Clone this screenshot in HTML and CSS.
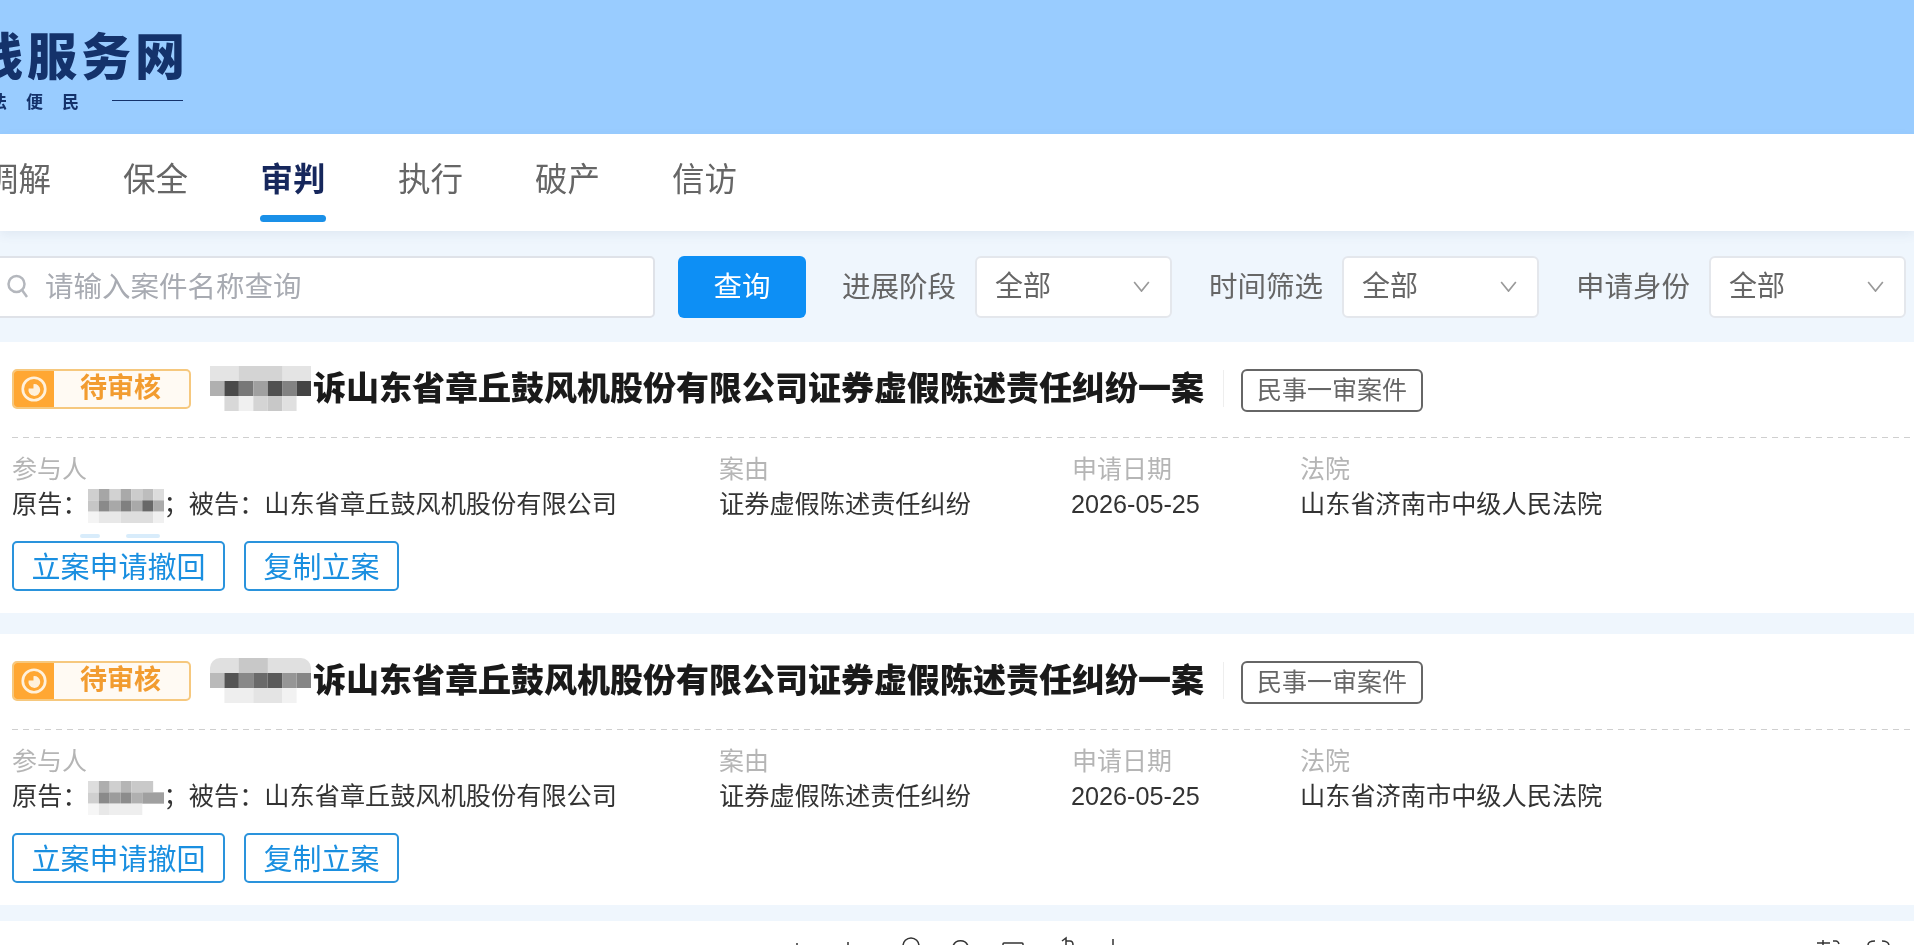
FILE: index.html
```html
<!DOCTYPE html>
<html lang="zh-CN">
<head>
  <meta charset="UTF-8">
  <meta name="viewport" content="width=device-width, initial-scale=1.0">
  <title>在线服务网</title>
  <link rel="stylesheet" href="styles.css">
</head>
<body>
  <header class="top">
    <div class="logo">
      <div class="logo-name">线服务网</div>
      <div class="logo-sub"><span class="logo-words">法便民</span><span class="logo-line"></span></div>
    </div>
  </header>

  <nav class="tabs">
    <a class="tab">调解</a>
    <a class="tab">保全</a>
    <a class="tab active">审判</a>
    <a class="tab">执行</a>
    <a class="tab">破产</a>
    <a class="tab">信访</a>
  </nav>

  <section class="filters">
    <div class="search">
      <svg class="search-icon" viewBox="0 0 22 24"><circle cx="9.5" cy="10" r="8" /><path d="M15 16l5 7" /></svg>
      <span>请输入案件名称查询</span>
    </div>
    <button class="search-btn">查询</button>
    <span class="filter-label first">进展阶段</span>
    <div class="select"><span>全部</span><svg viewBox="0 0 20 12"><path d="M2 1l8 10 8-10" /></svg></div>
    <span class="filter-label">时间筛选</span>
    <div class="select"><span>全部</span><svg viewBox="0 0 20 12"><path d="M2 1l8 10 8-10" /></svg></div>
    <span class="filter-label">申请身份</span>
    <div class="select"><span>全部</span><svg viewBox="0 0 20 12"><path d="M2 1l8 10 8-10" /></svg></div>
  </section>

  <main class="list">
    <article class="card">
      <div class="card-head">
        <div class="status">
          <span class="status-icon"><svg viewBox="0 0 28 28"><circle cx="14" cy="14" r="10.5" /><path d="M9 13.5h4.5v-4a5.5 5.5 0 1 1-4.500 4z" /></svg></span>
          <span class="status-text">待审核</span>
        </div>
        <svg class="mask-title" viewBox="0 0 7 3" preserveAspectRatio="none">
          <rect x="0" y="0" width="7" height="1" fill="#e4e4e4" /><rect x="2" y="0" width="3" height="1" fill="#d4d4d4" />
          <rect x="0" y="1" width="1" height="1" fill="#b0b0b0" /><rect x="1" y="1" width="1" height="1" fill="#4a4a4a" /><rect x="2" y="1" width="1" height="1" fill="#787878" /><rect x="3" y="1" width="1" height="1" fill="#a0a0a0" /><rect x="4" y="1" width="1" height="1" fill="#505050" /><rect x="5" y="1" width="1" height="1" fill="#828282" /><rect x="6" y="1" width="1" height="1" fill="#444444" />
          <rect x="1" y="2" width="1" height="1" fill="#d8d8d8" /><rect x="2" y="2" width="1" height="1" fill="#f0f0f0" /><rect x="3" y="2" width="1" height="1" fill="#d4d4d4" /><rect x="4" y="2" width="1" height="1" fill="#c8c8c8" /><rect x="5" y="2" width="1" height="1" fill="#e0e0e0" />
        </svg>
        <h2 class="case-title">诉山东省章丘鼓风机股份有限公司证券虚假陈述责任纠纷一案</h2>
        <span class="case-sep"></span>
        <span class="case-tag">民事一审案件</span>
      </div>
      <div class="meta">
        <div>
          <div class="meta-label">参与人</div>
          <div class="meta-value">原告：<svg class="mask-person" viewBox="0 0 7 3" preserveAspectRatio="none">
            <rect x="0" y="0" width="1" height="1" fill="#cfcfcf" /><rect x="1" y="0" width="1" height="1" fill="#a6a6a6" /><rect x="2" y="0" width="1" height="1" fill="#d2d2d2" /><rect x="3" y="0" width="1" height="1" fill="#a9a9a9" /><rect x="4" y="0" width="1" height="1" fill="#cccccc" /><rect x="5" y="0" width="1" height="1" fill="#bdbdbd" /><rect x="6" y="0" width="1" height="1" fill="#dcdcdc" />
            <rect x="0" y="1" width="1" height="1" fill="#c6c6c6" /><rect x="1" y="1" width="1" height="1" fill="#8a8a8a" /><rect x="2" y="1" width="1" height="1" fill="#a8a8a8" /><rect x="3" y="1" width="1" height="1" fill="#808080" /><rect x="4" y="1" width="1" height="1" fill="#a9a9a9" /><rect x="5" y="1" width="1" height="1" fill="#686868" /><rect x="6" y="1" width="1" height="1" fill="#ababab" />
            <rect x="0" y="2" width="1" height="1" fill="#f4f4f4" /><rect x="1" y="2" width="2" height="1" fill="#e8e8e8" /><rect x="3" y="2" width="3" height="1" fill="#dedede" /><rect x="6" y="2" width="1" height="1" fill="#f0f0f0" />
          </svg>；被告：山东省章丘鼓风机股份有限公司</div>
        </div>
        <div>
          <div class="meta-label">案由</div>
          <div class="meta-value">证券虚假陈述责任纠纷</div>
        </div>
        <div>
          <div class="meta-label">申请日期</div>
          <div class="meta-value date">2026-05-25</div>
        </div>
        <div>
          <div class="meta-label">法院</div>
          <div class="meta-value">山东省济南市中级人民法院</div>
        </div>
      </div>
      <span class="smudge one"></span>
      <span class="smudge two"></span>
      <div class="actions">
        <button class="action wide">立案申请撤回</button>
        <button class="action">复制立案</button>
      </div>
    </article>

    <article class="card">
      <div class="card-head">
        <div class="status">
          <span class="status-icon"><svg viewBox="0 0 28 28"><circle cx="14" cy="14" r="10.5" /><path d="M9 13.5h4.5v-4a5.500 5.500 0 1 1-4.500 4z" /></svg></span>
          <span class="status-text">待审核</span>
        </div>
        <svg class="mask-title round" viewBox="0 0 7 3" preserveAspectRatio="none">
          <rect x="0" y="0" width="7" height="1" fill="#e0e0e0" /><rect x="2" y="0" width="2" height="1" fill="#c8c8c8" />
          <rect x="0" y="1" width="1" height="1" fill="#bababa" /><rect x="1" y="1" width="1" height="1" fill="#545454" /><rect x="2" y="1" width="1" height="1" fill="#888888" /><rect x="3" y="1" width="1" height="1" fill="#6a6a6a" /><rect x="4" y="1" width="1" height="1" fill="#5a5a5a" /><rect x="5" y="1" width="1" height="1" fill="#969696" /><rect x="6" y="1" width="1" height="1" fill="#868686" />
          <rect x="1" y="2" width="2" height="1" fill="#eeeeee" /><rect x="3" y="2" width="2" height="1" fill="#e4e4e4" /><rect x="5" y="2" width="1" height="1" fill="#f2f2f2" />
        </svg>
        <h2 class="case-title">诉山东省章丘鼓风机股份有限公司证券虚假陈述责任纠纷一案</h2>
        <span class="case-sep"></span>
        <span class="case-tag">民事一审案件</span>
      </div>
      <div class="meta">
        <div>
          <div class="meta-label">参与人</div>
          <div class="meta-value">原告：<svg class="mask-person" viewBox="0 0 7 3" preserveAspectRatio="none">
            <rect x="0" y="0" width="1" height="1" fill="#dddddd" /><rect x="1" y="0" width="1" height="1" fill="#aeaeae" /><rect x="2" y="0" width="1" height="1" fill="#cfcfcf" /><rect x="3" y="0" width="1" height="1" fill="#b5b5b5" /><rect x="4" y="0" width="2" height="1" fill="#c9c9c9" />
            <rect x="0" y="1" width="1" height="1" fill="#cfcfcf" /><rect x="1" y="1" width="1" height="1" fill="#8a8a8a" /><rect x="2" y="1" width="1" height="1" fill="#9c9c9c" /><rect x="3" y="1" width="1" height="1" fill="#8c8c8c" /><rect x="4" y="1" width="1" height="1" fill="#b0b0b0" /><rect x="5" y="1" width="2" height="1" fill="#a0a0a0" />
            <rect x="0" y="2" width="1" height="1" fill="#f6f6f6" /><rect x="1" y="2" width="1" height="1" fill="#e8e8e8" /><rect x="2" y="2" width="3" height="1" fill="#eeeeee" />
          </svg>；被告：山东省章丘鼓风机股份有限公司</div>
        </div>
        <div>
          <div class="meta-label">案由</div>
          <div class="meta-value">证券虚假陈述责任纠纷</div>
        </div>
        <div>
          <div class="meta-label">申请日期</div>
          <div class="meta-value date">2026-05-25</div>
        </div>
        <div>
          <div class="meta-label">法院</div>
          <div class="meta-value">山东省济南市中级人民法院</div>
        </div>
      </div>
      <div class="actions">
        <button class="action wide">立案申请撤回</button>
        <button class="action">复制立案</button>
      </div>
    </article>
  </main>

  <footer class="toolbar">
    <svg viewBox="0 0 1914 24">
      <path d="M797 24v-2M848 24v-3M1113 24v-6" />
      <path d="M903 25a8 8 0 0 1 16 0M953 25a8 8 0 0 1 15 0" />
      <path d="M1003 25v-2q0-1 1-1h18q1 0 1 1v2" />
      <path d="M1062 20l4-3v7M1066 20h4q3 0 3 4" />
      <path d="M1817 22h13M1823 19v6M1833 20h3q2 0 3 3" />
      <path d="M1868 24q0-4 7-4M1882 20q6 0 7 4" />
    </svg>
  </footer>
</body>
</html>
```

FILE: styles.css
```css
* {
  box-sizing: border-box;
  margin: 0;
  padding: 0;
}

html, body {
  width: 1914px;
  height: 945px;
  overflow: hidden;
}

body {
  background: white;
  font-family: "Liberation Sans", "Noto Sans CJK SC", sans-serif;
  color: #333;
  filter: blur(0.5px);
}

.top {
  height: 134px;
  background: #99ccff;
  padding-top: 26px;
  overflow: hidden;
}

.logo {
  margin-left: -27px;
  color: #14326b;
}

.logo-name {
  font-size: 50px;
  line-height: 64px;
  font-weight: 900;
  letter-spacing: 4px;
}

.logo-sub {
  display: flex;
  align-items: center;
  height: 20px;
  margin-left: 17px;
}

.logo-words {
  font-family: "Noto Sans CJK SC", sans-serif;
  font-size: 17px;
  font-weight: 700;
  letter-spacing: 19px;
}

.logo-line {
  width: 71px;
  height: 1px;
  margin-left: 14px;
  background: #14326b;
}

.tabs {
  position: relative;
  display: flex;
  gap: 72px;
  height: 97px;
  padding: 24px 0 0 0;
  background: white;
  box-shadow: 0 4px 10px rgba(60, 90, 130, 0.08);
}

.tab {
  display: flex;
  flex-direction: column;
  align-items: center;
  font-size: 32.5px;
  line-height: 44px;
  color: #666;
}

.tab:first-child {
  margin-left: -14px;
}

.tab.active {
  font-weight: 700;
  color: #16275c;
}

.tab.active::after {
  content: "";
  width: 66px;
  height: 7px;
  margin-top: 13px;
  border-radius: 4px;
  background: #1a90e8;
}

.filters {
  display: flex;
  align-items: center;
  height: 111px;
  margin-left: -12px;
  background: #eff6fd;
}

.search {
  display: flex;
  align-items: center;
  gap: 16px;
  width: 667px;
  height: 62px;
  padding: 0 0 5px 17px;
  background: white;
  border: 2px solid #dfe2e8;
  border-radius: 5px;
  font-size: 28.5px;
  color: #a8abb2;
}

.search-icon {
  width: 22px;
  height: 24px;
  margin-top: 3px;
  fill: none;
  stroke: #b4b7bd;
  stroke-width: 2.5;
}

.search-btn {
  width: 128px;
  height: 62px;
  margin-left: 23px;
  padding-bottom: 5px;
  border: none;
  border-radius: 6px;
  background: #0d8ff5;
  color: white;
  font-family: inherit;
  font-size: 28.5px;
}

.filter-label {
  margin: 0 19px 0 37px;
  padding-bottom: 5px;
  font-size: 28.5px;
  color: #666;
}

.filter-label.first {
  margin-left: 36px;
}

.select {
  display: flex;
  align-items: center;
  justify-content: space-between;
  width: 197px;
  height: 62px;
  padding: 0 19px 0 18px;
  background: white;
  border: 2px solid #e4e7ec;
  border-radius: 6px;
  font-size: 28px;
  color: #666;
}

.select span {
  padding-bottom: 5px;
}

.select svg {
  width: 19px;
  height: 11px;
  fill: none;
  stroke: #999;
  stroke-width: 1.8;
}

.list {
  display: flex;
  flex-direction: column;
  gap: 21px;
  padding-bottom: 16px;
  background: #eff6fd;
}

.card {
  position: relative;
  height: 271px;
  padding: 23px 0 0 12px;
  background: white;
}

.card-head {
  display: flex;
  align-items: center;
  height: 47px;
  margin-bottom: 25px;
}

.status {
  display: flex;
  width: 179px;
  height: 40px;
  border: 2px solid #f6c87e;
  border-radius: 5px;
  background: #fffaf3;
  overflow: hidden;
}

.status-icon {
  display: flex;
  align-items: center;
  justify-content: center;
  width: 41px;
  margin-left: -1px;
  background: #ffa733;
}

.status-icon svg {
  width: 30px;
  height: 30px;
}

.status-icon circle {
  fill: none;
  stroke: #fff1dc;
  stroke-width: 2.5;
}

.status-icon path {
  fill: #fff1dc;
}

.status-text {
  margin-left: 26px;
  font-size: 27px;
  font-weight: 700;
  line-height: 34px;
  color: #f29c30;
}

.mask-title {
  width: 101px;
  height: 45px;
  margin-left: 19px;
  flex-shrink: 0;
  filter: blur(0.6px);
}

.mask-title.round {
  border-radius: 10px;
}

.case-title {
  margin-left: 2px;
  font-size: 33px;
  line-height: 44px;
  font-weight: 900;
  color: #1a1a1a;
  white-space: nowrap;
}

.case-sep {
  width: 1px;
  height: 37px;
  margin: 0 17px 0 19px;
  background: #eee;
}

.case-tag {
  height: 43px;
  margin-top: 4px;
  padding: 0 14px;
  border: 2px solid #666;
  border-radius: 6px;
  font-size: 25px;
  line-height: 38px;
  color: #666;
}

.meta {
  display: grid;
  grid-template-columns: 707px 353px 228px 1fr;
  padding-top: 15px;
  background: repeating-linear-gradient(to right, #cfcfcf 0, #cfcfcf 6px, transparent 6px, transparent 11px) top left / 100% 1px no-repeat;
}

.meta-label {
  font-size: 25px;
  line-height: 34px;
  color: #b5b5b5;
}

.meta-value {
  font-size: 25.2px;
  line-height: 36px;
  color: #333;
  white-space: nowrap;
}

.meta-value.date {
  margin-left: -1px;
}

.mask-person {
  width: 76px;
  height: 34px;
  vertical-align: middle;
  filter: blur(0.7px);
}

.smudge {
  position: absolute;
  top: 192px;
  height: 4px;
  background: #d8ecfb;
  border-radius: 2px;
}

.smudge.one {
  left: 80px;
  width: 20px;
}

.smudge.two {
  left: 126px;
  width: 34px;
}

.actions {
  display: flex;
  gap: 19px;
  margin-top: 18px;
}

.action {
  width: 155px;
  height: 50px;
  padding-bottom: 2px;
  border: 2.5px solid #2a93dc;
  border-radius: 5px;
  background: white;
  color: #1a8fe0;
  font-family: inherit;
  font-size: 29px;
}

.action.wide {
  width: 213px;
}

.toolbar {
  height: 24px;
}

.toolbar svg {
  display: block;
  width: 1914px;
  height: 24px;
  fill: none;
  stroke: #333;
  stroke-width: 1.5;
}
```
